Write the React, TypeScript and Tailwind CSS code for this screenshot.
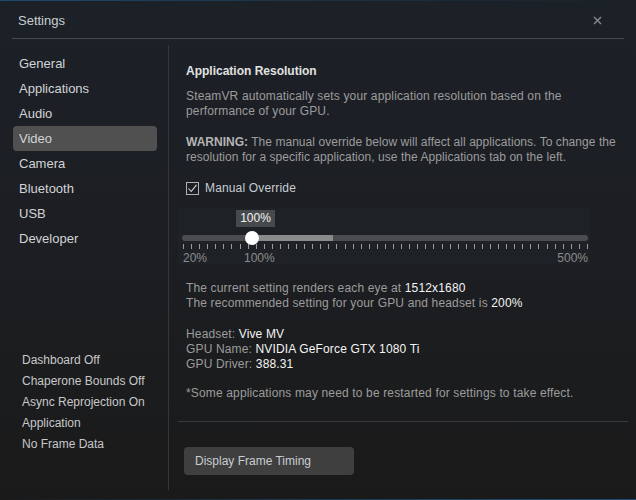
import React from 'react';

const NAV = ['General', 'Applications', 'Audio', 'Video', 'Camera', 'Bluetooth', 'USB', 'Developer'];
const STATUS = ['Dashboard Off', 'Chaperone Bounds Off', 'Async Reprojection On', 'Application', 'No Frame Data'];
const TICKS = Array.from({ length: 51 }, (_, i) => i);

function ResolutionSlider() {
  return (
    <div className="relative h-[56px] w-[412px] bg-[#1e2226]">
      <div className="absolute left-[58px] top-[2px] h-[17px] w-[39px] bg-[#474a4d] text-center text-[12px] leading-[17px] tracking-normal text-[#f2f2f2]">
        100%
      </div>
      <div className="absolute left-[4px] right-[2px] top-[27px] flex h-[6px] overflow-hidden rounded-full bg-[#4a4c4f]">
        <div className="w-[69px]" />
        <div className="w-[82px] bg-[#8a8b8c]" />
      </div>
      <div className="absolute left-[67px] top-[23px] h-[14px] w-[14px] rounded-full bg-white" />
      <div className="absolute left-[5px] right-[2px] top-[36px] flex h-[5px] justify-between">
        {TICKS.map(i => (
          <div key={i} className="h-full w-px bg-[#9a9a9a]" />
        ))}
      </div>
      <div className="absolute left-[5px] top-[43px] text-[12px] leading-[14px] tracking-normal text-[#8c8c8c]">20%</div>
      <div className="absolute left-[66px] top-[43px] text-[12px] leading-[14px] tracking-normal text-[#8c8c8c]">100%</div>
      <div className="absolute right-[2px] top-[43px] text-[12px] leading-[14px] tracking-normal text-[#8c8c8c]">500%</div>
    </div>
  );
}

export default function App() {
  return (
    <div className="relative flex h-[500px] w-[636px] flex-col overflow-hidden bg-linear-to-b from-[#1c2128] via-[#1c1e22] to-[#1a1a1a] font-['Liberation_Sans',Arial,sans-serif]">
      <div className="absolute left-0 top-0 h-px w-full bg-linear-to-r from-[#1f4a6e] via-[#1c3042] to-transparent" />
      <div className="absolute bottom-0 left-0 h-px w-full bg-linear-to-r from-transparent via-[#1f3a50] to-[#1f4a6e]" />

      {/* title bar */}
      <div className="mx-3 flex h-[39px] shrink-0 items-center justify-between border-b border-[#4a4a4a] pl-[6px] pr-[22px] pt-[4px]">
        <span className="text-[13px] text-[#c9ced3]">Settings</span>
        <svg width="9" height="9" viewBox="0 0 9 9" className="mb-[2px]">
          <path d="M1 1L8 8M8 1L1 8" stroke="#8a8a8a" strokeWidth="1.4" />
        </svg>
      </div>

      <div className="flex flex-1 pb-[10px] pt-[6px]">
        {/* sidebar */}
        <div className="flex w-[169px] shrink-0 flex-col border-r border-[#363636] pl-[13px] pr-[11px]">
          <div className="mt-[6px] flex flex-col">
            {NAV.map(item => (
              <div
                key={item}
                className={`h-[25px] rounded-sm px-[6px] text-[13px] leading-[25px] text-[#d2d4d6] ${item === 'Video' ? 'bg-[#505050]' : ''}`}
              >
                {item}
              </div>
            ))}
          </div>
          <div className="mt-auto mb-[35px] flex flex-col pl-[9px]">
            {STATUS.map(s => (
              <div key={s} className="h-[21px] text-[12px] leading-[21px] text-[#c8c8c8]">
                {s}
              </div>
            ))}
          </div>
        </div>

        {/* content */}
        <div className="flex min-w-0 flex-1 flex-col whitespace-nowrap pl-[9px] pr-[8px] pt-[19px] text-[12px] leading-[15px] tracking-[0.15px] text-[#9c9c9c]">
          <div className="px-[8px]">
            <div className="font-bold tracking-normal text-[#e2e2e2]">Application Resolution</div>
            <p className="mt-[10px]">
              SteamVR automatically sets your application resolution based on the
              <br />
              performance of your GPU.
            </p>
            <p className="mt-[16px] tracking-[0.05px]">
              <span className="font-bold tracking-normal text-[#b4b4b4]">WARNING:</span> The manual override below will affect all applications. To change the
              <br />
              resolution for a specific application, use the Applications tab on the left.
            </p>
            <div className="mt-[16px] flex items-center gap-[6px]">
              <div className="flex h-[13px] w-[13px] items-center justify-center border border-[#b0b0b0]">
                <svg width="11" height="11" viewBox="0 0 11 11">
                  <path d="M1.5 5.5L4.2 8.5L9.5 1.8" fill="none" stroke="#d8d8d8" strokeWidth="1.1" />
                </svg>
              </div>
              <span className="text-[#c8cdd2]">Manual Override</span>
            </div>
          </div>

          <div className="mt-[12px]">
            <ResolutionSlider />
          </div>

          <div className="px-[8px]">
            <p className="mt-[17px]">
              The current setting renders each eye at <span className="text-[#f4f4f4]">1512x1680</span>
              <br />
              The recommended setting for your GPU and headset is <span className="text-[#f4f4f4]">200%</span>
            </p>
            <p className="mt-[16px]">
              Headset: <span className="text-[#f4f4f4]">Vive MV</span>
              <br />
              GPU Name: <span className="text-[#f4f4f4]">NVIDIA GeForce GTX 1080 Ti</span>
              <br />
              GPU Driver: <span className="text-[#f4f4f4]">388.31</span>
            </p>
            <p className="mt-[14px]">*Some applications may need to be restarted for settings to take effect.</p>
          </div>

          <div className="mt-[20px] border-t border-[#3a3a3a]" />

          <div className="mt-[25px] pl-[6px]">
            <button className="h-[28px] w-[170px] rounded-sm bg-[#3f3f3f] pl-[11px] text-left text-[12px] tracking-normal text-[#c8cdd2]">
              Display Frame Timing
            </button>
          </div>
        </div>
      </div>
    </div>
  );
}
